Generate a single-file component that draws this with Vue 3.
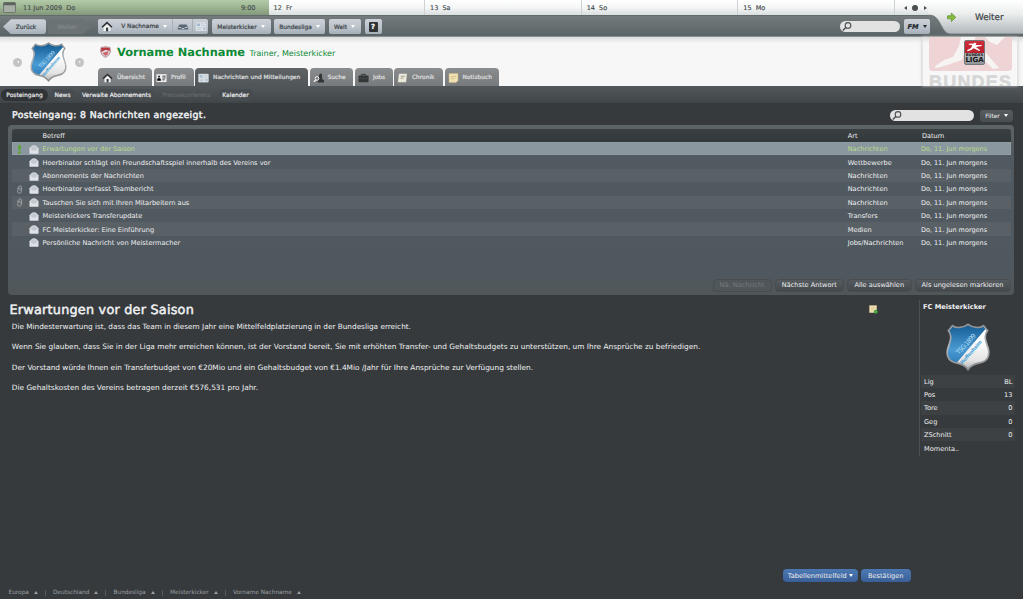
<template>
  <div class="screen">
    <svg class="defs" width="0" height="0">
      <defs>
        <linearGradient id="blue" x1="0" y1="0" x2="0" y2="1">
          <stop offset="0" stop-color="#0f568e" />
          <stop offset="0.55" stop-color="#4c9ad3" />
          <stop offset="1" stop-color="#1f6fae" />
        </linearGradient>
        <linearGradient id="silver" x1="0" y1="0" x2="0" y2="1">
          <stop offset="0.3" stop-color="#ffffff" />
          <stop offset="0.75" stop-color="#e4e4e4" />
          <stop offset="1" stop-color="#a9a9a9" />
        </linearGradient>
        <linearGradient id="rim" x1="0" y1="0" x2="0" y2="1">
          <stop offset="0" stop-color="#8f9294" />
          <stop offset="0.5" stop-color="#b4b7b9" />
          <stop offset="1" stop-color="#85888a" />
        </linearGradient>
        <linearGradient id="corner" x1="0" y1="0" x2="0" y2="1">
          <stop offset="0" stop-color="#ffffff" />
          <stop offset="0.4" stop-color="#eceeee" />
          <stop offset="1" stop-color="#b0b7ba" />
        </linearGradient>
        <clipPath id="shield">
          <path d="M65 5C50 16 30 17 19 9L8 23C21 37 13 56 6 76C0 100 12 114 31 117C48 120 58 127 65 137C72 127 82 120 99 117C118 114 130 100 124 76C117 56 109 37 122 23L111 9C100 17 80 16 65 5Z" />
        </clipPath>
        <symbol id="crest" viewBox="0 0 130 142">
          <g clip-path="url(#shield)">
            <rect width="130" height="142" fill="url(#blue)" />
            <path d="M120 14L28 122L60 142H130Z" fill="url(#silver)" />
            <text transform="translate(38 94) rotate(-47)" font-size="19" fill="#a9dcf5" textLength="76">TSG 1899</text>
            <text transform="translate(49 123) rotate(-49)" font-size="15" font-weight="bold" fill="#3e9fd6" textLength="88" lengthAdjust="spacingAndGlyphs">Hoffenheim</text>
          </g>
          <path d="M65 4C50 15 30 16 19 8L7 23C20 37 12 56 5 76C-1 101 11 115 30 118C48 121 58 128 65 138C72 128 82 121 100 118C119 115 131 101 125 76C118 56 110 37 123 23L111 8C100 16 80 15 65 4Z" fill="none" stroke="url(#rim)" stroke-width="5" />
        </symbol>
        <symbol id="home" viewBox="0 0 12 12">
          <path d="M2.3 6.5L6 3L9.7 6.5V11H2.3Z" fill="#f1f3f4" />
          <path d="M0.6 6.8L6 1.8L11.4 6.8" fill="none" stroke="#303335" stroke-width="1.8" />
          <rect x="4.9" y="7.2" width="2.4" height="4" fill="#3b3e40" />
        </symbol>
        <symbol id="envelope" viewBox="0 0 10 9">
          <path d="M0.5 3.2L3 0.8Q5 -0.2 7 0.8L9.5 3.2V8.2Q9.5 8.7 9 8.7H1Q0.5 8.7 0.5 8.2Z" fill="#dfe3e7" />
          <path d="M1.4 3.4L3.3 1.5Q5 0.7 6.7 1.5L8.6 3.4Q7.5 5.7 5 5.8Q2.5 5.7 1.4 3.4Z" fill="#c3c9d1" />
        </symbol>
        <symbol id="news" viewBox="0 0 12 10">
          <rect x="0.5" y="0.5" width="11" height="9" rx="0.6" fill="#dfe5ea" stroke="#b9c0c7" stroke-width="0.5" />
          <rect x="1.7" y="2" width="3.4" height="2.6" fill="#a3b8cc" />
          <path d="M6.2 2.2H8M9 2.2h1.6M6.2 4H10.4M1.8 6.2H7M1.8 7.8H6" stroke="#b7c0c8" stroke-width="0.8" />
          <rect x="8" y="5.7" width="2.6" height="2.6" fill="#b0c1d0" />
        </symbol>
        <symbol id="lens" viewBox="0 0 12 11">
          <circle cx="7" cy="4.4" r="2.8" fill="none" stroke="#4a4e50" stroke-width="1.1" />
          <path d="M4.8 6.5L1.8 9.6" stroke="#4a4e50" stroke-width="1.4" />
        </symbol>
        <symbol id="note" viewBox="0 0 10 10">
          <path d="M0.5 0.5H9.5V7.5L7.5 9.5H0.5Z" fill="#f0dfb0" stroke="#c9b682" stroke-width="0.5" />
          <path d="M2.5 3.5H7.5M2.5 5.5H6" stroke="#cdb982" stroke-width="0.8" />
        </symbol>
        <symbol id="player" viewBox="0 0 82 33">
          <path d="M5 30L15 23L24 20L30 9L32 0H47L43 7L57 16L70 31L64 32L52 20L36 14L33 23L18 28L8 31ZM56 0H76L68 8L61 5Z" />
        </symbol>
      </defs>
    </svg>

    <div class="calendar">
      <div class="today">
        <svg class="cal-icon" viewBox="0 0 13 11">
          <rect x="0.5" y="0.5" width="12" height="10" rx="1" fill="#a2a9a0" stroke="#646b65" stroke-width="0.8" />
          <rect x="0.6" y="0.6" width="11.8" height="2.6" fill="#5c625d" />
          <path d="M2 5H11M2 7H11M2 9H11" stroke="#b3b9b0" stroke-width="0.7" />
        </svg>
        <span class="date">11 Jun 2009&nbsp; Do</span>
        <span class="time">9:00</span>
      </div>
      <div v-for="day in days" :key="day" class="day">{{ day }}</div>
      <div class="pager"><i class="tri left"></i><i class="dot"></i><i class="tri right"></i></div>
    </div>

    <div class="toolbar">
      <button class="back">Zurück</button>
      <button class="forward">Weiter</button>
      <div class="group">
        <span class="cell home"><svg><use href="#home" /></svg></span>
        <span class="cell name">V Nachname<i class="tri down"></i></span>
        <span class="cell"><svg viewBox="0 0 12 10"><path d="M2.5 3H9.5L11.2 6.2V8H0.8V6.2Z" fill="#5b6875" /><path d="M1.5 6H4L5 7H7L8 6H10.5" stroke="#d3dae0" fill="none" stroke-width="0.8" /></svg></span>
        <span class="cell last"><svg><use href="#news" /></svg></span>
      </div>
      <button class="drop w59">Meisterkicker<i class="tri down"></i></button>
      <button class="drop w51">Bundesliga<i class="tri down"></i></button>
      <button class="drop w32">Welt<i class="tri down"></i></button>
      <button class="help"><b>?</b></button>
      <div class="search small"><svg><use href="#lens" /></svg></div>
      <button class="fm">FM<i class="tri down"></i></button>
    </div>

    <div class="continue">
      <svg viewBox="0 0 95 37">
        <path d="M0 0H95V34H22C13 34 13 15.2 2 15.2H0Z" fill="url(#corner)" />
        <path d="M0 15.2H2C13 15.2 13 34 22 34H95" fill="none" stroke="#687173" stroke-width="0.8" />
        <path d="M19.5 15.8H23.3V13L27.8 17.3L23.3 21.6V18.8H19.5Z" fill="#85ba3b" stroke="#5c8f2c" stroke-width="0.7" />
      </svg>
      <span>Weiter</span>
    </div>

    <header class="header">
      <i class="nav-dot"><i class="tri left"></i></i>
      <svg class="club"><use href="#crest" /></svg>
      <i class="nav-dot"><i class="tri right"></i></i>
      <div class="person">
        <div class="title">
          <svg class="badge" viewBox="0 0 11 12">
            <path d="M1 1.5Q5.5 0 10 1.5L10.4 6Q9.5 9.5 5.5 11.5Q1.5 9.5 0.6 6Z" fill="#d9d4d5" stroke="#a4676b" stroke-width="0.7" />
            <path d="M1.2 2.2Q5.5 0.6 9.8 2.2V5L5.5 3.8L1.2 6Z" fill="#b8363f" />
            <path d="M2.5 7L8.5 5.2L7.5 8.3L5.5 10Z" fill="#cd6268" />
          </svg>
          <h1>Vorname Nachname</h1>
          <span>Trainer, Meisterkicker</span>
        </div>
        <nav class="tabs">
          <div class="tab t1"><svg><use href="#home" /></svg>Übersicht</div>
          <div class="tab t2">
            <svg viewBox="0 0 12 10"><rect x="0.5" y="0.8" width="11" height="8.6" fill="#eceeef" /><circle cx="3.3" cy="3.4" r="1.2" fill="#37393a" /><path d="M1.5 8V6.2Q3.3 3.8 5 6.2V8M7 3H10.5M7 5H10.5M7 7H9.5" stroke="#37393a" stroke-width="1" /></svg>Profil
          </div>
          <div class="tab t3 active"><svg><use href="#news" /></svg>Nachrichten und Mitteilungen</div>
          <div class="tab t4">
            <svg viewBox="0 0 12 11"><path d="M5 10.5V8L7 1.5Q9 -0.5 9.8 2L10 6.5L12 8V10.5Z" fill="#323536" /><circle cx="4.4" cy="6" r="2" fill="#777" stroke="#fff" stroke-width="1" /><path d="M3 7.5L0.8 9.8" stroke="#fff" stroke-width="1.2" /></svg>Suche
          </div>
          <div class="tab t5">
            <svg viewBox="0 0 12 10"><path d="M4 2.6V1H8V2.6" fill="none" stroke="#303334" /><rect x="0.5" y="2.3" width="11" height="7.2" rx="1" fill="#343738" /><path d="M0.6 5.3H11.4" stroke="#56595a" stroke-width="0.6" /></svg>Jobs
          </div>
          <div class="tab t6">
            <svg viewBox="0 0 10 10"><path d="M1.5 0.7H9.4L8.6 9.3H0.4Z" fill="#ece9da" /><path d="M3.2 3.3H7.4M3 5.2H6" stroke="#9c998c" stroke-width="0.9" /></svg>Chronik
          </div>
          <div class="tab t7"><svg><use href="#note" /></svg>Notizbuch</div>
        </nav>
      </div>
      <div class="league">
        <div class="red"><svg><use href="#player" fill="#f7f4f4" /></svg></div>
        <div class="word">BUNDES</div>
        <div class="mini">
          <svg viewBox="0 0 20 12"><path d="M2 9.5L6.5 7L7.5 4L4 3.5V2.5L9 2.4L10.5 1.2L12 2.5L11 4L17.5 4V5L11.5 6L16 9.5L15 10.3L9 7.3L7 9L3 10.5Z" fill="#fff" /></svg>
          <small>BUNDES</small>
          <b>LIGA</b>
        </div>
      </div>
    </header>

    <nav class="subnav">
      <span class="current">Posteingang</span>
      <span class="s2">News</span>
      <span class="s3">Verwalte Abonnements</span>
      <span class="off">Pressekonferenz</span>
      <span class="s5">Kalender</span>
    </nav>

    <div class="inbox-head">
      <h2>Posteingang: 8 Nachrichten angezeigt.</h2>
      <div class="search"><svg><use href="#lens" /></svg></div>
      <button class="filter">Filter<i class="tri down"></i></button>
    </div>

    <section class="inbox">
      <div class="row head"><span></span><span></span><span>Betreff</span><span>Art</span><span class="dt">Datum</span></div>
      <div v-for="(m, i) in messages" :key="i" class="row" :class="{ selected: i === 0, alt: i > 0 && i % 2 === 0 }">
        <span class="flag">
          <svg v-if="m.flag === 'important'" viewBox="0 0 7 9"><path d="M1.9 0.3H5.1L4.3 5.6H2.7Z" fill="#5aa82c" /><circle cx="3.5" cy="7.6" r="1.3" fill="#5aa82c" /></svg>
          <svg v-if="m.flag === 'attachment'" viewBox="0 0 7 9"><path d="M1.3 4L3 1.2Q5.2 0 5.6 2V6.5Q5 8.6 3 8.2Q1.3 8 1.5 5.8L3 3Q4.3 2.5 4.1 4.2V6.2" fill="none" stroke="#a4a9ac" stroke-width="0.8" /></svg>
        </span>
        <span class="mail"><svg><use href="#envelope" /></svg></span>
        <span class="subject">{{ m.subject }}</span>
        <span>{{ m.type }}</span>
        <span class="when">Do, 11. Jun morgens</span>
      </div>
      <div class="actions">
        <button class="a1" disabled>Nä. Nachricht</button>
        <button class="a2">Nächste Antwort</button>
        <button class="a3">Alle auswählen</button>
        <button class="a4">Als ungelesen markieren</button>
      </div>
    </section>

    <main class="detail">
      <article>
        <div class="detail-head">
          <h2>Erwartungen vor der Saison</h2>
          <svg viewBox="0 0 10 10"><use href="#note" width="9" height="9" /><circle cx="7.5" cy="7.5" r="2.2" fill="#3b9b3c" /><path d="M6.1 7.5H8.9M7.5 6.1V8.9" stroke="#6cc065" stroke-width="0.6" /></svg>
        </div>
        <p v-for="p in paragraphs" :key="p">{{ p }}</p>
      </article>
      <aside>
        <h3>FC Meisterkicker</h3>
        <svg class="crest"><use href="#crest" /></svg>
        <div v-for="s in stats" :key="s.label" class="stat"><span>{{ s.label }}</span><span>{{ s.value }}</span></div>
      </aside>
    </main>

    <div class="confirm">
      <button class="choice">Tabellenmittelfeld<i class="tri down"></i></button>
      <button>Bestätigen</button>
    </div>

    <footer class="footer">
      <span class="f1">Europa<i class="tri up"></i></span>
      <span class="f2">Deutschland<i class="tri up"></i></span>
      <span class="f3">Bundesliga<i class="tri up"></i></span>
      <span class="f4">Meisterkicker<i class="tri up"></i></span>
      <span class="f5">Vorname Nachname<i class="tri up"></i></span>
    </footer>
  </div>
</template>

<script setup>
const days = ['12  Fr', '13  Sa', '14  So', '15  Mo']

const messages = [
  { subject: 'Erwartungen vor der Saison', type: 'Nachrichten', flag: 'important' },
  { subject: 'Hoerbinator schlägt ein Freundschaftsspiel innerhalb des Vereins vor', type: 'Wettbewerbe' },
  { subject: 'Abonnements der Nachrichten', type: 'Nachrichten' },
  { subject: 'Hoerbinator verfasst Teambericht', type: 'Nachrichten', flag: 'attachment' },
  { subject: 'Tauschen Sie sich mit Ihren Mitarbeitern aus', type: 'Nachrichten', flag: 'attachment' },
  { subject: 'Meisterkickers Transferupdate', type: 'Transfers' },
  { subject: 'FC Meisterkicker: Eine Einführung', type: 'Medien' },
  { subject: 'Persönliche Nachricht von Meistermacher', type: 'Jobs/Nachrichten' }
]

const paragraphs = [
  'Die Mindesterwartung ist, dass das Team in diesem Jahr eine Mittelfeldplatzierung in der Bundesliga erreicht.',
  'Wenn Sie glauben, dass Sie in der Liga mehr erreichen können, ist der Vorstand bereit, Sie mit erhöhten Transfer- und Gehaltsbudgets zu unterstützen, um Ihre Ansprüche zu befriedigen.',
  'Der Vorstand würde Ihnen ein Transferbudget von €20Mio und ein Gehaltsbudget von €1.4Mio /Jahr für Ihre Ansprüche zur Verfügung stellen.',
  'Die Gehaltskosten des Vereins betragen derzeit €576,531 pro Jahr.'
]

const stats = [
  { label: 'Lig', value: 'BL' },
  { label: 'Pos', value: '13' },
  { label: 'Tore', value: '0' },
  { label: 'Geg', value: '0' },
  { label: 'ZSchnitt', value: '0' },
  { label: 'Momenta..', value: '' }
]
</script>

<style>
body {
  margin: 0;
  background: #363a3d;
}
</style>

<style scoped>
.screen {
  position: relative;
  display: flex;
  flex-direction: column;
  width: 1023px;
  height: 599px;
  overflow: hidden;
  background: #363a3d;
  color: #f0f1f2;
  font-family: "DejaVu Sans", sans-serif;
  font-size: 6.6px;
  text-rendering: geometricPrecision;
  white-space: nowrap;
}

.screen * {
  box-sizing: border-box;
}

.defs {
  position: absolute;
}

h1, h2, h3, p {
  margin: 0;
}

button {
  display: flex;
  align-items: center;
  justify-content: center;
  flex: none;
  padding: 0;
  border: none;
  font: inherit;
  color: inherit;
  white-space: nowrap;
}

.tri {
  display: inline-block;
  flex: none;
  width: 0;
  height: 0;
  border: 2px solid transparent;
}

.tri.down {
  border-top: 3px solid #fff;
  border-bottom: none;
  margin-left: 4px;
}

.tri.up {
  border-bottom: 3px solid #9b9fa1;
  border-top: none;
}

.tri.left {
  border-right: 3.5px solid #4a4e50;
  border-left: none;
}

.tri.right {
  border-left: 3.5px solid #4a4e50;
  border-right: none;
}

/* calendar strip */
.calendar {
  display: flex;
  flex: none;
  height: 15px;
  color: #454c4e;
  line-height: 16px;
  font-size: 6.5px;
  -webkit-text-stroke: 0.15px;
}

.today {
  display: flex;
  align-items: center;
  width: 268.5px;
  padding: 0 13px 0 3px;
  background: linear-gradient(#b4cba9, #9db491 50%, #82987a);
}

.cal-icon {
  width: 13px;
  height: 11px;
  margin-right: 7px;
}

.time {
  margin-left: auto;
}

.day {
  width: 156.6px;
  padding-left: 5px;
  border-right: 1px solid #cdd1d1;
  background: linear-gradient(#ffffff, #f5f6f6 50%, #d9dede);
  white-space: pre;
}

.pager {
  display: flex;
  align-items: center;
  gap: 5.5px;
  flex: 1;
  padding-left: 9px;
  background: linear-gradient(#ffffff, #f5f6f6 50%, #d9dede);
}

.dot {
  width: 6px;
  height: 6px;
  border-radius: 50%;
  background: #4a4e50;
}

/* toolbar */
.toolbar {
  display: flex;
  align-items: center;
  flex: none;
  height: 22px;
  padding-top: 1.5px;
  padding-left: 3px;
  border-top: 1px solid #646b6d;
  border-bottom: 1.5px solid #8a9193;
  background: linear-gradient(#737b7d, #5a6365);
  color: #3b4247;
  font-size: 5.9px;
  -webkit-text-stroke: 0.2px;
}

.toolbar button,
.group {
  height: 15px;
  border-radius: 2px;
  background: linear-gradient(#cdd2d8, #b9c1c9 60%, #a6afb8);
}

.toolbar .back {
  width: 43px;
  padding-left: 3px;
  border-radius: 3px;
  clip-path: polygon(0 50%, 8px 0, 100% 0, 100% 100%, 8px 100%);
}

.toolbar .forward {
  width: 43px;
  margin-left: 2px;
  padding-right: 5px;
  background: #6b7375;
  color: #82898b;
  clip-path: polygon(0 0, 35px 0, 100% 50%, 35px 100%, 0 100%);
}

.group {
  display: flex;
  width: 110px;
  margin-left: 7px;
}

.cell {
  display: flex;
  align-items: center;
  justify-content: center;
  width: 20px;
  border-right: 1px solid #a7afb7;
}

.cell.home {
  width: 18px;
  border: none;
}

.cell.name {
  width: 57px;
}

.cell.last {
  flex: 1;
  width: auto;
  border: none;
}

.cell svg {
  width: 12px;
  height: 11px;
}

.toolbar .drop {
  margin-left: 3.5px;
}

.w59 {
  width: 59px;
}

.w51 {
  width: 51px;
}

.w32 {
  width: 32px;
}

.toolbar .help {
  width: 17px;
  margin-left: 4px;
}

.help b {
  width: 9px;
  height: 10px;
  border-radius: 1px;
  background: #303436;
  color: #fff;
  font-size: 7px;
  line-height: 10px;
}

.search {
  width: 84px;
  height: 11px;
  border-radius: 6px;
  background: #e2e2e2;
}

.search svg {
  display: block;
  width: 12px;
  height: 11px;
  margin-left: 1px;
}

.search.small {
  width: 60px;
  margin-left: auto;
}

.toolbar .fm {
  width: 26px;
  margin: 0 93px 0 4px;
  font-size: 6.6px;
  font-weight: bold;
  font-style: italic;
  color: #23282b;
}

.fm .tri.down {
  border-top-color: #23282b;
}

.continue {
  position: absolute;
  top: 0;
  right: 0;
  width: 95px;
  height: 37px;
  color: #3c4345;
  font-size: 8.8px;
}

.continue svg {
  display: block;
  width: 95px;
  height: 37px;
}

.continue span {
  position: absolute;
  left: 47px;
  top: 12.5px;
  -webkit-text-stroke: 0.2px;
}

/* club header */
.header {
  display: flex;
  flex: none;
  height: 49px;
  padding-left: 13px;
  background: linear-gradient(#dcdcdc, #f7f7f7 6px);
}

.nav-dot {
  display: flex;
  align-items: center;
  justify-content: center;
  width: 9px;
  height: 9px;
  margin-top: 20.5px;
  border-radius: 50%;
  background: #c3c5c5;
}

.nav-dot .tri {
  border-width: 1.5px 2px;
}

.nav-dot .tri.left {
  border-right-color: #fff;
}

.nav-dot .tri.right {
  border-left-color: #fff;
}

.club {
  width: 37px;
  height: 40px;
  margin: 4.5px 8px 0;
}

.person {
  display: flex;
  flex-direction: column;
  justify-content: space-between;
  margin-left: 14px;
}

.title {
  display: flex;
  align-items: baseline;
  padding-top: 8px;
  padding-left: 2px;
  color: #0b8a36;
}

.badge {
  width: 11px;
  height: 12px;
  align-self: center;
}

h1 {
  margin-left: 6px;
  font-size: 11.35px;
  line-height: 14px;
}

.title span {
  margin-left: 4.5px;
  font-size: 8px;
}

.tabs {
  display: flex;
  gap: 1.5px;
}

.tab {
  display: flex;
  align-items: center;
  height: 18px;
  padding-top: 1px;
  padding-left: 4px;
  border-radius: 4px 4px 0 0;
  background: linear-gradient(#8a8c8e, #777a7c);
  color: #e2e4e5;
  font-size: 5.88px;
  -webkit-text-stroke: 0.15px;
}

.tab.active {
  background: linear-gradient(#5f6366, #505558);
}

.tab svg {
  width: 11px;
  height: 10px;
  margin-right: 4px;
}

.t1 { width: 54px; }
.t2 { width: 40px; padding-left: 2.5px; }
.t3 { width: 113px; padding-left: 3px; }
.t4 { width: 43.5px; padding-left: 3px; }
.t5 { width: 38px; padding-left: 3.5px; }
.t6 { width: 49px; padding-left: 3px; }
.t7 { width: 54px; padding-left: 3px; }

.league {
  position: relative;
  width: 96px;
  height: 49px;
  margin: 0 5px 0 auto;
  padding: 0 5px 0 6px;
  border: 1px solid #e3e3e3;
  border-width: 0 1.5px;
  box-shadow: 0 0 3px #c9c9c9;
  overflow: hidden;
}

.red {
  height: 34px;
  border-radius: 0 0 4px 4px;
  background: #efd4d6;
}

.red svg {
  display: block;
  width: 82px;
  height: 33px;
}

.word {
  margin-top: 1px;
  color: #d5d6d6;
  font-family: "Liberation Sans", sans-serif;
  font-size: 18px;
  font-weight: bold;
  line-height: 20px;
  letter-spacing: 1.2px;
  -webkit-text-stroke: 0.5px;
}

.mini {
  position: absolute;
  left: 41px;
  top: 3px;
  width: 21px;
  height: 25px;
  border: 1px solid #747779;
  border-radius: 2px;
  background: linear-gradient(#d02c39, #b8202c 12px, #b9bcbe 12px, #929698);
  color: #151617;
  text-align: center;
}

.mini svg {
  display: block;
  width: 19px;
  height: 12px;
}

.mini small,
.mini b {
  display: block;
  font-size: 3.8px;
  line-height: 4px;
  font-weight: bold;
}

.mini b {
  font-size: 7px;
  line-height: 7px;
}

/* sub navigation */
.subnav {
  display: flex;
  align-items: center;
  flex: none;
  height: 17px;
  background: linear-gradient(#52575b, #404548);
  font-size: 5.95px;
  -webkit-text-stroke: 0.15px;
}

.subnav span {
  height: 12px;
  border-radius: 6px;
  line-height: 13px;
  text-align: center;
  background: #474c50;
}

.subnav .current {
  width: 47px;
  margin-left: 1px;
  background: #303437;
}

.subnav .s2 {
  width: 24px;
  margin-left: 2.5px;
}

.subnav .s3 {
  width: 75px;
  margin-left: 4.5px;
}

.subnav .off {
  width: 58px;
  margin-left: 3.5px;
  background: none;
  color: #65696c;
}

.subnav .s5 {
  width: 36px;
  margin-left: 2px;
}

/* inbox */
.inbox-head {
  display: flex;
  align-items: center;
  flex: none;
  height: 21.5px;
  padding: 4px 10px 0 12px;
}

.inbox-head h2 {
  font-size: 9.3px;
  font-weight: normal;
  letter-spacing: 0.38px;
  -webkit-text-stroke: 0.45px;
}

.inbox-head .search {
  margin-left: auto;
}

.filter {
  width: 33px;
  height: 12px;
  margin-left: 6.5px;
  border-radius: 3px;
  background: linear-gradient(#575c60, #484d50);
  font-size: 5.9px;
}

.inbox {
  display: flex;
  flex-direction: column;
  flex: none;
  width: 1006.5px;
  height: 170.5px;
  margin-left: 7.5px;
  padding: 4.3px 3.5px 3.5px 4.5px;
  border-radius: 4px;
  background: linear-gradient(#5c6465, #525a61 30px, #50585f 150px, #505758);
}

.row {
  display: grid;
  grid-template-columns: 14px 16.5px 805.2px 73.2px auto;
  align-items: center;
  flex: none;
  height: 13.4px;
  padding-top: 0.9px;
}

.row.head {
  height: 13.3px;
  border-radius: 3px 3px 0 0;
  background: linear-gradient(#3b4043, #33383a);
}

.row.alt {
  background: #596066;
}

.row.selected {
  background: #8a979f;
  box-shadow: inset 0 0 0 0.5px #98a4ab;
  color: #b9dc8a;
}

.subject {
  font-size: 6.63px;
}

.dt {
  padding-left: 1px;
}

.when {
  font-size: 6.5px;
}

.flag svg {
  display: block;
  width: 7px;
  height: 9px;
  margin-left: 4px;
}

.mail svg {
  display: block;
  width: 10px;
  height: 9px;
  margin-left: 3px;
}

.actions {
  display: flex;
  justify-content: flex-end;
  gap: 3px;
  margin-top: auto;
}

.actions button {
  height: 13px;
  padding-top: 0.5px;
  border: 0.8px solid #474d51;
  border-radius: 4px;
  background: linear-gradient(#555b5f, #45494d);
}

.actions button:disabled {
  background: #50575b;
  color: #73797c;
}

.actions .a1 { width: 59px; }
.actions .a2 { width: 69.5px; }
.actions .a3 { width: 64.5px; }
.actions .a4 { width: 96px; }

/* message */
.detail {
  display: flex;
  justify-content: space-between;
  flex: none;
  height: 267px;
  padding: 5px 5px 0 9.5px;
}

article {
  padding-top: 3px;
  width: 868px;
}

.detail-head {
  display: flex;
  justify-content: space-between;
  height: 17.5px;
}

.detail-head h2 {
  font-size: 12.8px;
  font-weight: normal;
  line-height: 16.5px;
  letter-spacing: 0.23px;
  -webkit-text-stroke: 0.5px;
}

.detail-head svg {
  width: 9px;
  height: 9px;
  margin-top: 2px;
}

article p {
  height: 20.6px;
  margin-left: 2.3px;
  font-size: 7.38px;
  line-height: 12px;
}

article p:first-of-type {
  font-size: 7.3px;
}

aside {
  width: 99px;
  height: 155.5px;
  border-left: 1px solid #4c5154;
}

aside h3 {
  padding-left: 3px;
  font-size: 6.65px;
  font-weight: bold;
  line-height: 14px;
}

.crest {
  display: block;
  width: 44px;
  height: 48px;
  margin: 9px 0 3.5px 26px;
}

.stat {
  display: flex;
  align-items: center;
  justify-content: space-between;
  height: 13.4px;
  margin-left: 1px;
  padding: 1px 5.5px 0 3px;
}

.stat:nth-of-type(odd) {
  background: linear-gradient(90deg, #3d4144 94px, transparent 94px);
}

/* reply */
.confirm {
  display: flex;
  gap: 3px;
  margin-left: 783px;
  margin-top: 7px;
}

.confirm button {
  width: 49.5px;
  height: 12.5px;
  padding-top: 0.5px;
  border-radius: 4px;
  background: linear-gradient(#4d79b2, #3a5f98);
  box-shadow: 0 0 1px #23364f;
}

.confirm .choice {
  width: 75px;
}

.confirm .tri.down {
  margin-left: 2.5px;
}

.footer {
  display: flex;
  align-items: center;
  height: 8px;
  margin-top: 7.2px;
  padding-left: 8.5px;
  color: #9b9fa1;
  font-size: 5.8px;
}

.footer span {
  display: flex;
  align-items: center;
  justify-content: space-between;
  padding-right: 7px;
  margin-right: 7.5px;
  border-right: 1px solid #55595c;
}

.f1 { width: 37px; }
.f2 { width: 53px; }
.f3 { width: 49px; }
.f4 { width: 55.5px; }
.f5 { width: 75px; }

.footer .f5 {
  border: none;
}
</style>
